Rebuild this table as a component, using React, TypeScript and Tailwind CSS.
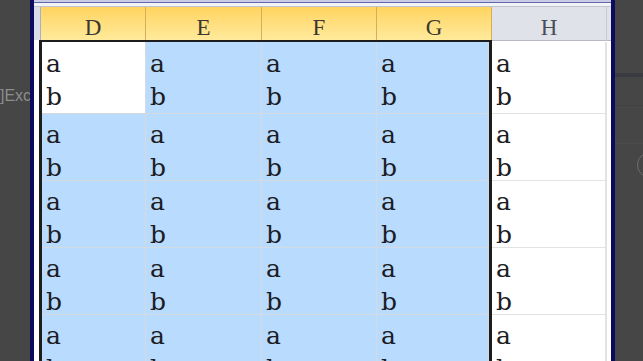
import React from "react";

type Cell = { tone: "active" | "sel" | "plain" };

const ROWS = [
  { h: "h-[72px]", pt: "pt-[5px]" },
  { h: "h-[67px]", pt: "pt-[4px]" },
  { h: "h-[67px]", pt: "pt-[4px]" },
  { h: "h-[67px]", pt: "pt-[4px]" },
  { h: "h-[67px]", pt: "pt-[4px]" },
];

const cellFont = { fontFamily: '"DejaVu Serif", serif' };
const headFont = { fontFamily: '"Liberation Serif", "DejaVu Serif", serif' };

function CellText({ pt }: { pt: string }) {
  return (
    <div className={`${pt} pl-[4px] text-[25px] leading-[33px] text-[#1c1c24]`} style={cellFont}>
      <div>a</div>
      <div>b</div>
    </div>
  );
}

function SelHeader({ label, w }: { label: string; w: string }) {
  return (
    <div className={`${w} h-[35px] flex flex-col`}>
      <div className="h-[33px] shrink-0 flex justify-center border-r border-[#d7ae58] bg-gradient-to-b from-[#ffd45f] to-[#ffea9b]">
        <span className="pt-[9px] text-[23px] leading-none text-[#3c3830]" style={headFont}>
          {label}
        </span>
      </div>
      <div className="h-[2px] shrink-0 bg-[#1d1d1d]" />
    </div>
  );
}

export default function App() {
  return (
    <div className="w-[643px] h-[361px] overflow-hidden flex bg-[#464646]">
      {/* desktop strip on the left with a clipped window title */}
      <div className="w-[30px] shrink-0 overflow-hidden">
        <div
          className="mt-[86px] whitespace-nowrap text-[16px] leading-[20px] text-[#8d8d8d]"
          style={{ fontFamily: '"Liberation Sans", Arial, sans-serif' }}
        >
          ]Exc
        </div>
      </div>

      {/* spreadsheet window */}
      <div className="w-[585px] shrink-0 border-x-4 border-[#0b0b60] flex flex-col bg-white">
        <div className="h-[2px] shrink-0 bg-[#cacce6]" />
        <div className="h-px shrink-0 bg-[#6368ad]" />
        <div className="h-[3px] shrink-0 bg-[#f2f3f7]" />
        <div className="h-px shrink-0 bg-[#c0c4cf]" />

        {/* column headers */}
        <div className="flex h-[35px] shrink-0">
          <div className="w-[7px] flex flex-col">
            <div className="h-[33px] shrink-0 bg-[#d9dcea] border-r border-[#a9b0c0]" />
            <div className="h-[2px] shrink-0 flex">
              <div className="w-[5px] bg-white" />
              <div className="w-[2px] bg-[#1d1d1d]" />
            </div>
          </div>
          <SelHeader label="D" w="w-[105px]" />
          <SelHeader label="E" w="w-[116px]" />
          <SelHeader label="F" w="w-[115px]" />
          <SelHeader label="G" w="w-[115px]" />
          <div className="w-[115px] h-[35px] flex flex-col bg-white">
            <div className="h-[34px] shrink-0 flex justify-center bg-[#dfe2e8] border-r border-b border-r-[#c7cbd2] border-b-[#b6bac0]">
              <span className="pt-[9px] text-[23px] leading-none text-[#4a4d55]" style={headFont}>
                H
              </span>
            </div>
          </div>
          <div className="flex-1 flex flex-col">
            <div className="h-[34px] shrink-0 bg-[#dfe2e8] border-b border-[#b6bac0]" />
          </div>
        </div>

        {/* rows */}
        {ROWS.map((r, i) => {
          const cells: Cell[] = [
            { tone: i === 0 ? "active" : "sel" },
            { tone: "sel" },
            { tone: "sel" },
            { tone: "sel" },
          ];
          const widths = ["w-[104px]", "w-[116px]", "w-[115px]", "w-[112px]"];
          return (
            <div key={i} className={`flex shrink-0 ${r.h}`}>
              <div className="w-[5px] bg-white" />
              <div className="w-[3px] bg-[#1d1d1d]" />
              {cells.map((c, j) => (
                <div
                  key={j}
                  className={`${widths[j]} border-r border-b ${
                    c.tone === "active"
                      ? "bg-white border-r-[#d5dbe3] border-b-[#d6d6d6]"
                      : "bg-[#b9dbfd] border-[#d3dae2]"
                  }`}
                >
                  <CellText pt={r.pt} />
                </div>
              ))}
              <div className="w-[3px] bg-[#1d1d1d]" />
              <div className="w-[115px] bg-white border-r-2 border-b border-[#e2e2e2]">
                <CellText pt={r.pt} />
              </div>
              <div className="flex-1 bg-white" />
            </div>
          );
        })}
      </div>

      {/* desktop strip on the right */}
      <div className="flex-1 flex flex-col overflow-hidden">
        <div className="mt-[73px] h-[4px] shrink-0 bg-[#3a3a42]" />
        <div className="mt-[28px] h-px shrink-0 bg-[#404040]" />
        <div className="mt-[37px] h-px shrink-0 bg-[#4c4c4c]" />
        <div className="mt-[8px] ml-[22px] w-[26px] h-[26px] shrink-0 rounded-full border border-[#6c6c6c]" />
      </div>
    </div>
  );
}
